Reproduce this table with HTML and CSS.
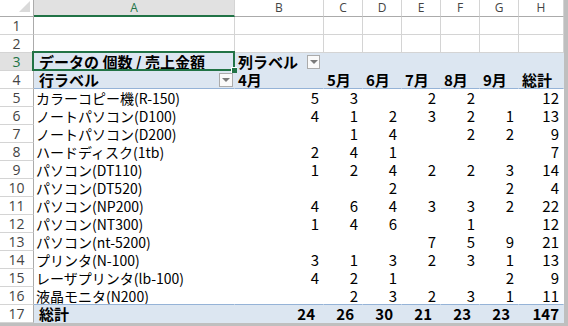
FILE: index.html
```html
<!DOCTYPE html>
<html lang="ja">
<head>
<meta charset="utf-8">
<title>ピボットテーブル</title>
<link rel="stylesheet" href="styles.css">
</head>
<body>
<div class="frame">
  <div class="sheet">
    <!-- column headers -->
    <div class="corner"><svg width="12" height="12" viewBox="0 0 12 12"><polygon points="11,0 11,11 0,11" fill="#DADADA"/></svg></div>
    <div class="ch sel">A</div>
    <div class="ch">B</div>
    <div class="ch">C</div>
    <div class="ch">D</div>
    <div class="ch">E</div>
    <div class="ch">F</div>
    <div class="ch">G</div>
    <div class="ch">H</div>

    <!-- row 1 -->
    <div class="rh">1</div>
    <div class="c"></div><div class="c"></div><div class="c"></div><div class="c"></div><div class="c"></div><div class="c"></div><div class="c"></div><div class="c"></div>
    <!-- row 2 -->
    <div class="rh">2</div>
    <div class="c"></div><div class="c"></div><div class="c"></div><div class="c"></div><div class="c"></div><div class="c"></div><div class="c"></div><div class="c"></div>

    <!-- row 3 -->
    <div class="rh sel">3</div>
    <div class="c ph b first">データの 個数 / 売上金額</div>
    <div class="c ph b"><span>列ラベル</span><span class="dd dd-col"><i></i></span></div>
    <div class="c ph"></div><div class="c ph"></div><div class="c ph"></div><div class="c ph"></div><div class="c ph"></div><div class="c ph"></div>

    <!-- row 4 -->
    <div class="rh">4</div>
    <div class="c ph b hl first"><span>行ラベル</span><span class="dd dd-row"><i></i></span></div>
    <div class="c ph b hl">4月</div>
    <div class="c ph b hl">5月</div>
    <div class="c ph b hl">6月</div>
    <div class="c ph b hl">7月</div>
    <div class="c ph b hl">8月</div>
    <div class="c ph b hl">9月</div>
    <div class="c ph b hl">総計</div>

    <!-- row 5 -->
    <div class="rh">5</div>
    <div class="c pv lbl">カラーコピー機(R-150)</div>
    <div class="c pv n">5</div><div class="c pv n">3</div><div class="c pv n"></div><div class="c pv n">2</div><div class="c pv n">2</div><div class="c pv n"></div><div class="c pv n">12</div>
    <!-- row 6 -->
    <div class="rh">6</div>
    <div class="c pv lbl">ノートパソコン(D100)</div>
    <div class="c pv n">4</div><div class="c pv n">1</div><div class="c pv n">2</div><div class="c pv n">3</div><div class="c pv n">2</div><div class="c pv n">1</div><div class="c pv n">13</div>
    <!-- row 7 -->
    <div class="rh">7</div>
    <div class="c pv lbl">ノートパソコン(D200)</div>
    <div class="c pv n"></div><div class="c pv n">1</div><div class="c pv n">4</div><div class="c pv n"></div><div class="c pv n">2</div><div class="c pv n">2</div><div class="c pv n">9</div>
    <!-- row 8 -->
    <div class="rh">8</div>
    <div class="c pv lbl">ハードディスク(1tb)</div>
    <div class="c pv n">2</div><div class="c pv n">4</div><div class="c pv n">1</div><div class="c pv n"></div><div class="c pv n"></div><div class="c pv n"></div><div class="c pv n">7</div>
    <!-- row 9 -->
    <div class="rh">9</div>
    <div class="c pv lbl">パソコン(DT110)</div>
    <div class="c pv n">1</div><div class="c pv n">2</div><div class="c pv n">4</div><div class="c pv n">2</div><div class="c pv n">2</div><div class="c pv n">3</div><div class="c pv n">14</div>
    <!-- row 10 -->
    <div class="rh">10</div>
    <div class="c pv lbl">パソコン(DT520)</div>
    <div class="c pv n"></div><div class="c pv n"></div><div class="c pv n">2</div><div class="c pv n"></div><div class="c pv n"></div><div class="c pv n">2</div><div class="c pv n">4</div>
    <!-- row 11 -->
    <div class="rh">11</div>
    <div class="c pv lbl">パソコン(NP200)</div>
    <div class="c pv n">4</div><div class="c pv n">6</div><div class="c pv n">4</div><div class="c pv n">3</div><div class="c pv n">3</div><div class="c pv n">2</div><div class="c pv n">22</div>
    <!-- row 12 -->
    <div class="rh">12</div>
    <div class="c pv lbl">パソコン(NT300)</div>
    <div class="c pv n">1</div><div class="c pv n">4</div><div class="c pv n">6</div><div class="c pv n"></div><div class="c pv n">1</div><div class="c pv n"></div><div class="c pv n">12</div>
    <!-- row 13 -->
    <div class="rh">13</div>
    <div class="c pv lbl">パソコン(nt-5200)</div>
    <div class="c pv n"></div><div class="c pv n"></div><div class="c pv n"></div><div class="c pv n">7</div><div class="c pv n">5</div><div class="c pv n">9</div><div class="c pv n">21</div>
    <!-- row 14 -->
    <div class="rh">14</div>
    <div class="c pv lbl">プリンタ(N-100)</div>
    <div class="c pv n">3</div><div class="c pv n">1</div><div class="c pv n">3</div><div class="c pv n">2</div><div class="c pv n">3</div><div class="c pv n">1</div><div class="c pv n">13</div>
    <!-- row 15 -->
    <div class="rh">15</div>
    <div class="c pv lbl">レーザプリンタ(lb-100)</div>
    <div class="c pv n">4</div><div class="c pv n">2</div><div class="c pv n">1</div><div class="c pv n"></div><div class="c pv n"></div><div class="c pv n">2</div><div class="c pv n">9</div>
    <!-- row 16 -->
    <div class="rh">16</div>
    <div class="c pv lbl">液晶モニタ(N200)</div>
    <div class="c pv n"></div><div class="c pv n">2</div><div class="c pv n">3</div><div class="c pv n">2</div><div class="c pv n">3</div><div class="c pv n">1</div><div class="c pv n">11</div>

    <!-- row 17 -->
    <div class="rh">17</div>
    <div class="c ph b tot first">総計</div>
    <div class="c ph b tot n tn">24</div>
    <div class="c ph b tot n tn">26</div>
    <div class="c ph b tot n tn">30</div>
    <div class="c ph b tot n tn">21</div>
    <div class="c ph b tot n tn">23</div>
    <div class="c ph b tot n tn">23</div>
    <div class="c ph b tot n">147</div>

    <div class="selbox"></div>
    <div class="handle"></div>
  </div>
</div>
</body>
</html>
```
FILE: styles.css
```css
html, body {
  margin: 0;
  padding: 0;
  background: #BFBFBF;
  overflow: hidden;
}

.frame {
  width: 568px;
  height: 326px;
  background: #BFBFBF;
}

.sheet {
  position: relative;
  width: 564px;
  height: 323px;
  background: #FFFFFF;
  display: grid;
  grid-template-columns: 34px 201px 89px 39px 39px 39px 39px 39px 45px;
  grid-template-rows: 17px repeat(17, 18px);
}

.sheet > div {
  box-sizing: border-box;
}

.corner {
  background: #FFFFFF;
  border-right: 1px solid #ABABAB;
  border-bottom: 1px solid #ABABAB;
  display: flex;
  align-items: flex-end;
  justify-content: flex-end;
  padding: 0 2px 3px 0;
}

.corner svg {
  display: block;
}

.ch {
  background: #FFFFFF;
  border-right: 1px solid #D4D4D4;
  border-bottom: 1px solid #ABABAB;
  color: #444444;
  font-family: "Open Sans", "Noto Sans", sans-serif;
  font-size: 12px;
  line-height: 16px;
  text-align: center;
}

.ch.sel {
  background: #E1E1E1;
  color: #217346;
  border-bottom: 2px solid #217346;
  line-height: 15px;
}

.rh {
  background: #FFFFFF;
  border-right: 1px solid #ABABAB;
  border-bottom: 1px solid #D4D4D4;
  color: #444444;
  font-family: "Open Sans", "Noto Sans", sans-serif;
  font-size: 14px;
  line-height: 18px;
  text-align: center;
}

.rh.sel {
  background: #E1E1E1;
  color: #217346;
}

.c {
  border-right: 1px solid #D4D4D4;
  border-bottom: 1px solid #D4D4D4;
  font-family: "Noto Sans CJK JP", "Noto Sans", sans-serif;
  font-size: 15px;
  line-height: 18px;
  color: #000000;
  padding: 0 3px;
  white-space: nowrap;
  overflow: visible;
  display: flex;
  align-items: center;
}

.pv {
  border-color: transparent;
  background: #FFFFFF;
}

.lbl {
  font-size: 14px;
  padding-left: 2px;
}

.ph {
  border-color: transparent;
  background: #DCE6F1;
}

.first {
  padding-left: 5px;
  padding-right: 1px;
}

.b {
  font-weight: bold;
}

.hl {
  border-bottom: 1px solid #95B3D7;
}

.tot {
  border-top: 1px solid #95B3D7;
  margin-top: -1px;
  height: 19px;
}

.n {
  justify-content: flex-end;
  padding-right: 4px;
}

.tn {
  padding-right: 8px;
}

.dd {
  box-sizing: border-box;
  width: 14px;
  height: 14px;
  border: 1px solid #ABABAB;
  background: #FAFAFA;
  display: flex;
  align-items: center;
  justify-content: center;
}

.dd i {
  display: block;
  width: 0;
  height: 0;
  border-left: 4px solid transparent;
  border-right: 4px solid transparent;
  border-top: 4px solid #7A7A7A;
}

.dd-col {
  margin-left: 9px;
}

.dd-row {
  margin-left: auto;
}

.selbox {
  position: absolute;
  left: 32px;
  top: 51px;
  width: 203px;
  height: 20px;
  border: 2px solid #217346;
  pointer-events: none;
}

.handle {
  position: absolute;
  left: 231px;
  top: 67px;
  width: 6px;
  height: 6px;
  background: #217346;
  border: 1px solid #FFFFFF;
  border-width: 1px 0 0 1px;
}
```
